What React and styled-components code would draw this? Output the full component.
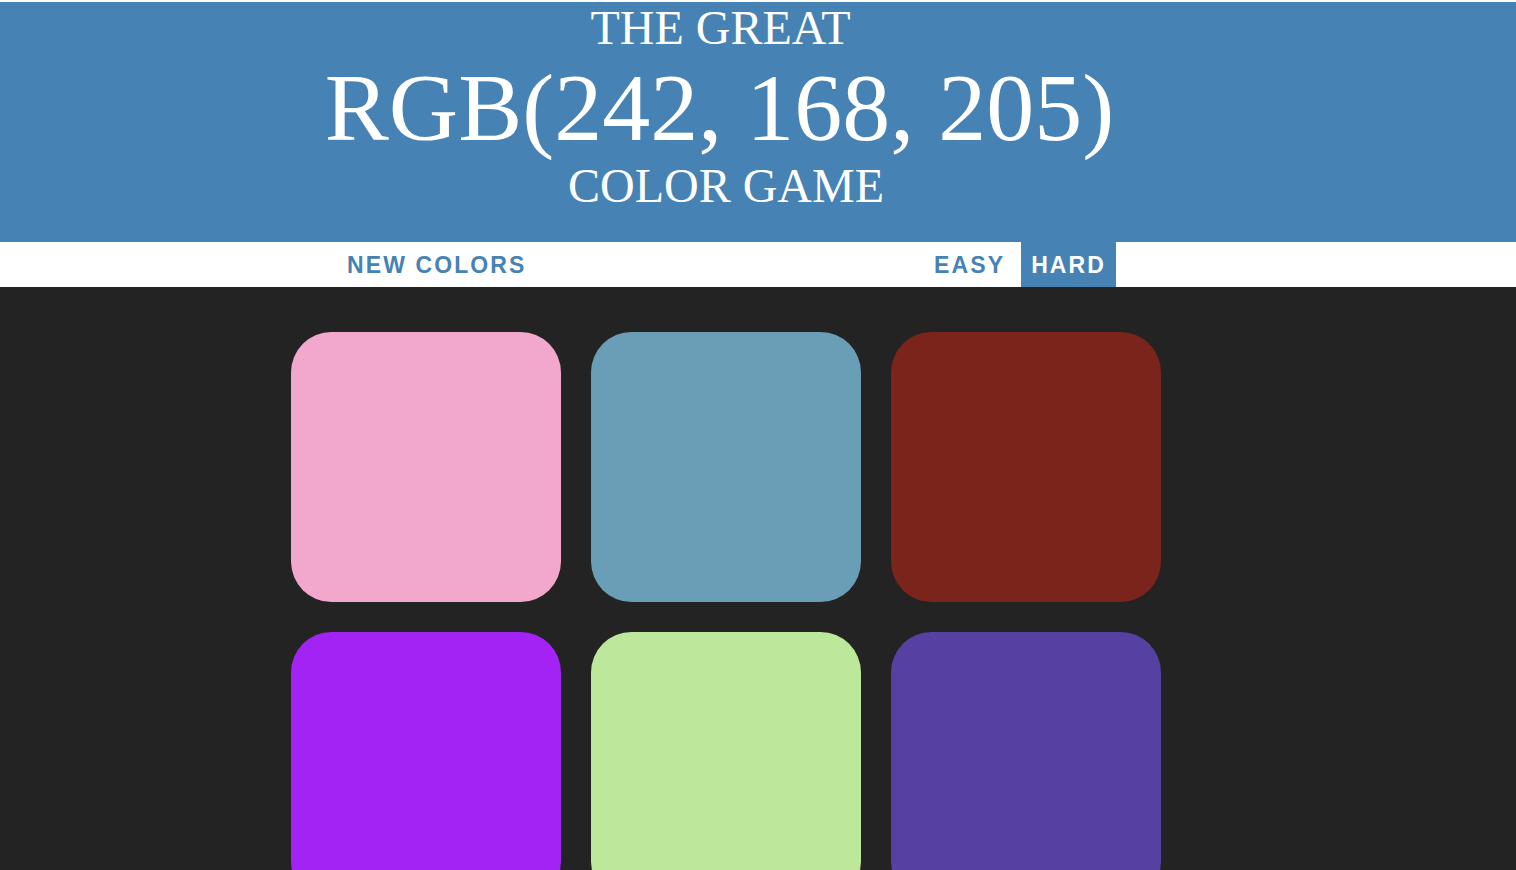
import styled, { createGlobalStyle } from "styled-components";

const GlobalStyle = createGlobalStyle`
  html, body {
    margin: 0;
    padding: 0;
    background: #232323;
    overflow: hidden;
  }
  * {
    box-sizing: border-box;
  }
`;

const Band = styled.div`
  width: 100%;
  padding-right: 64px;
  background: ${(p) => p.bg};
`;

const Header = styled(Band)`
  border-top: 2px solid #fff;
  padding-bottom: 29px;
`;

const Title = styled.h1`
  margin: 0;
  font-family: "Liberation Serif", "Times New Roman", serif;
  font-weight: normal;
  color: #fff;
  text-align: center;
  text-transform: uppercase;
  line-height: 1.1;
`;

const Line = styled.span`
  display: block;
  font-size: ${(p) => (p.big ? "96px" : "48px")};
  padding-right: ${(p) => p.trail || 0}px;
`;

const Stripe = styled(Band)`
  height: 45px;
`;

const StripeInner = styled.div`
  width: 900px;
  height: 100%;
  margin: 0 auto;
  padding: 0 60px 0 61px;
  display: flex;
  justify-content: space-between;
  align-items: stretch;
`;

const Modes = styled.div`
  display: flex;
  gap: 6px;
`;

const Button = styled.button`
  border: none;
  margin: 0;
  padding: 1px 10px 0;
  height: 100%;
  font-family: "Liberation Sans", Arial, sans-serif;
  font-weight: bold;
  font-size: 23px;
  letter-spacing: 2.1px;
  text-transform: uppercase;
  cursor: pointer;
  color: ${(p) => (p.selected ? "#fff" : "#4682b4")};
  background: ${(p) => (p.selected ? "#4682b4" : "transparent")};
`;

const Board = styled.div`
  width: 900px;
  margin: 30px auto 0;
  display: grid;
  grid-template-columns: repeat(3, 270px);
  gap: 30px;
  padding: 15px;
`;

const Square = styled.div`
  width: 270px;
  height: 270px;
  border-radius: 15%;
  background: ${(p) => p.color};
`;

const colors = [
  "rgb(242, 168, 205)",
  "rgb(106, 158, 183)",
  "rgb(123, 36, 27)",
  "rgb(162, 35, 243)",
  "rgb(189, 232, 155)",
  "rgb(86, 65, 163)",
];

export default function App() {
  return (
    <>
      <GlobalStyle />
      <Header bg="#4682b4">
        <Title>
          <Line trail={11}>The Great</Line>
          <Line big trail={13}>RGB(242, 168, 205)</Line>
          <Line>Color Game</Line>
        </Title>
      </Header>
      <Stripe bg="#fff">
        <StripeInner>
          <Button>New Colors</Button>
          <Modes>
            <Button>Easy</Button>
            <Button selected>Hard</Button>
          </Modes>
        </StripeInner>
      </Stripe>
      <Band bg="#232323">
        <Board>
          {colors.map((c) => (
            <Square key={c} color={c} />
          ))}
        </Board>
      </Band>
    </>
  );
}
